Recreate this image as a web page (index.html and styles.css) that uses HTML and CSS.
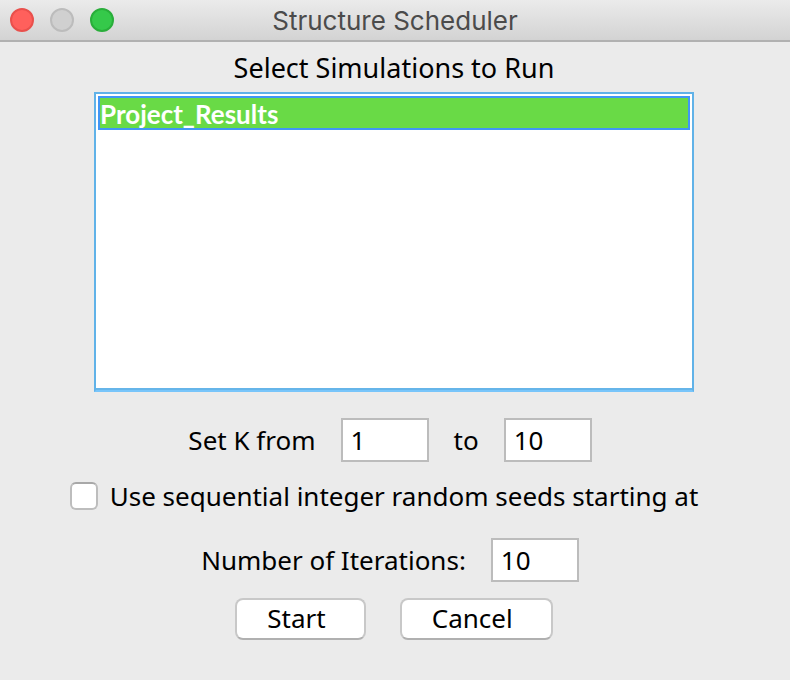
FILE: index.html
```html
<!DOCTYPE html>
<html lang="en">
<head>
<meta charset="utf-8">
<title>Structure Scheduler</title>
<link rel="stylesheet" href="styles.css">
</head>
<body>
<header class="titlebar">
  <div class="lights">
    <button class="light close" type="button" aria-label="Close"></button>
    <button class="light minimize" type="button" aria-label="Minimize" disabled></button>
    <button class="light expand" type="button" aria-label="Zoom"></button>
  </div>
  <h1 class="title">Structure Scheduler</h1>
</header>
<form class="panel">
  <label class="heading" for="simulations">Select Simulations to Run</label>
  <select class="simulations" id="simulations" size="8" multiple>
    <option class="simulation" selected>Project_Results</option>
  </select>
  <div class="row range">
    <label for="k-from">Set K from</label>
    <input class="field" id="k-from" type="text" value="1">
    <label for="k-to">to</label>
    <input class="field" id="k-to" type="text" value="10">
  </div>
  <div class="row seeds">
    <input class="check" id="seeds" type="checkbox">
    <label for="seeds">Use sequential integer random seeds starting at</label>
  </div>
  <div class="row iterations">
    <label for="iterations">Number of Iterations:</label>
    <input class="field" id="iterations" type="text" value="10">
  </div>
  <div class="actions">
    <button class="button" type="button">Start</button>
    <button class="button" type="button">Cancel</button>
  </div>
</form>
</body>
</html>
```
FILE: styles.css
```css
* {
  box-sizing: border-box;
}

body {
  margin: 0;
  min-height: 100vh;
  background: #ebebeb;
  color: #000;
  font: 26px/34px "Noto Sans", "Open Sans", sans-serif;
}

input,
select,
button {
  margin: 0;
  color: inherit;
  font: inherit;
}

.titlebar {
  display: grid;
  grid-template-columns: 1fr auto 1fr;
  align-items: center;
  height: 42px;
  padding: 0 10px;
  border-bottom: 2px solid #b1b1b1;
  background: linear-gradient(#ebebeb, #d3d3d3);
}

.lights {
  display: flex;
  gap: 16px;
}

.light {
  width: 24px;
  height: 24px;
  padding: 0;
  border: 2px solid;
  border-radius: 50%;
}

.close {
  border-color: #e9504c;
  background: #ff605c;
}

.minimize {
  border-color: #bcbcbc;
  background: #d0d0d0;
}

.expand {
  border-color: #29ae3a;
  background: #35c94a;
}

.title {
  margin: 0;
  padding-top: 2px;
  color: #4b4b4b;
  font: 26px/34px Inter, sans-serif;
}

.panel {
  display: flex;
  flex-direction: column;
  padding: 9px 96px 40px 94px;
}

.heading {
  align-self: center;
  font-size: 27px;
}

.simulations {
  width: 100%;
  height: 300px;
  margin-top: 7px;
  padding: 2px;
  overflow: hidden;
  border: 2px solid #60b2e8;
  border-bottom-color: #78c5fa;
  border-radius: 0;
  outline: none;
  background: #fff;
  box-shadow: inset 0 -2px #66b5e9;
}

.simulation {
  height: 34px;
  min-height: 34px;
  padding: 0;
  border: 2px solid #4196f5;
  font-family: Lato, sans-serif;
  font-weight: 700;
}

.simulation:checked {
  background: #69da46 linear-gradient(#69da46, #69da46);
  color: #fff;
}

.row {
  display: flex;
  align-items: center;
  justify-content: center;
  gap: 25px;
  padding-right: 8px;
  white-space: nowrap;
}

.range {
  margin-top: 26px;
}

.field {
  width: 88px;
  height: 44px;
  padding: 0 8px;
  border: 2px solid #bcbcbc;
  border-radius: 0;
  background: #fff;
}

.seeds {
  gap: 12px;
  margin-top: 17px;
  padding-right: 20px;
}

.check {
  flex: none;
  width: 28px;
  height: 28px;
  border: 2px solid #bdbdbd;
  border-top-color: #a8a8a8;
  border-radius: 6px;
  appearance: none;
  background: #fff;
}

.iterations {
  margin-top: 25px;
}

.actions {
  display: flex;
  justify-content: center;
  gap: 34px;
  margin-top: 16px;
}

.button {
  height: 42px;
  padding: 0 38px 2px 30px;
  border: 2px solid #c8c8c8;
  border-bottom-color: #b0b0b0;
  border-radius: 8px;
  background: #fff;
}
```
